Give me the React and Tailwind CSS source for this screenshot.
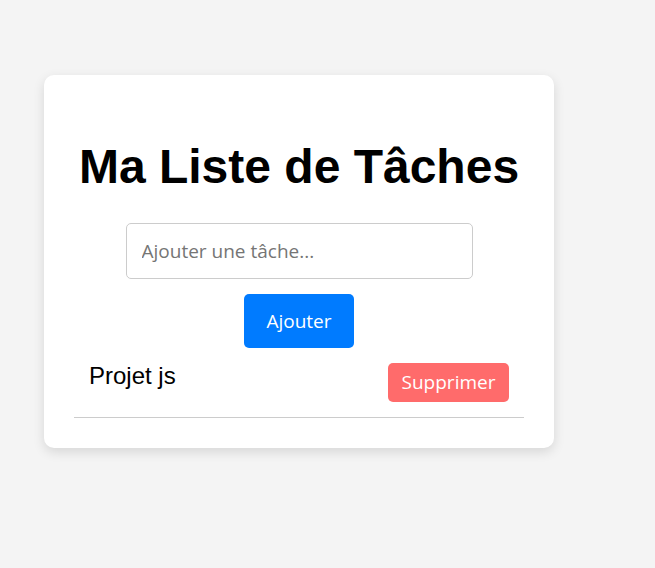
import { useState } from 'react';

const App = () => {
  const [tasks, setTasks] = useState(['Projet js']);
  const [newTask, setNewTask] = useState('');

  const addTask = () => {
    if (!newTask.trim()) return;
    setTasks([...tasks, newTask.trim()]);
    setNewTask('');
  };

  const removeTask = (index) => {
    setTasks(tasks.filter((_, i) => i !== index));
  };

  return (
    <div className="min-h-screen bg-[#f4f4f4] pt-[75px] pl-[44px] font-['Liberation_Sans',Arial,sans-serif]">
      <div className="w-[510px] bg-white rounded-[10px] shadow-[0_4px_12px_rgba(0,0,0,0.12)] p-[30px]">
        <h1 className="mt-[34px] mb-[29px] text-[48px] leading-[55px] font-bold text-black text-center">
          Ma Liste de Tâches
        </h1>

        {/* Task input */}
        <input
          type="text"
          placeholder="Ajouter une tâche..."
          value={newTask}
          onChange={(e) => setNewTask(e.target.value)}
          className="block mx-auto w-[347px] h-[56px] px-[15px] border border-[#cccccc] rounded-[5px] text-[19px] font-['Open_Sans',sans-serif] placeholder:text-[#757575] outline-none"
        />
        <button
          onClick={addTask}
          className="block mx-auto mt-[15px] w-[110px] h-[54px] bg-[#007bff] text-white rounded-[5px] text-[19px] font-['Open_Sans',sans-serif]"
        >
          Ajouter
        </button>

        <ul>
          {tasks.map((task, i) => (
            <li
              key={i}
              className="flex items-start justify-between pt-[14px] pb-[15px] px-[15px] border-b border-[#cccccc]"
            >
              <span className="text-[24px] leading-[28px] text-black">{task}</span>
              <button
                onClick={() => removeTask(i)}
                className="w-[121px] h-[39px] bg-[#ff6b6b] text-white rounded-[5px] text-[19px] font-['Open_Sans',sans-serif] mt-px"
              >
                Supprimer
              </button>
            </li>
          ))}
        </ul>
      </div>
    </div>
  );
};

export default App;
